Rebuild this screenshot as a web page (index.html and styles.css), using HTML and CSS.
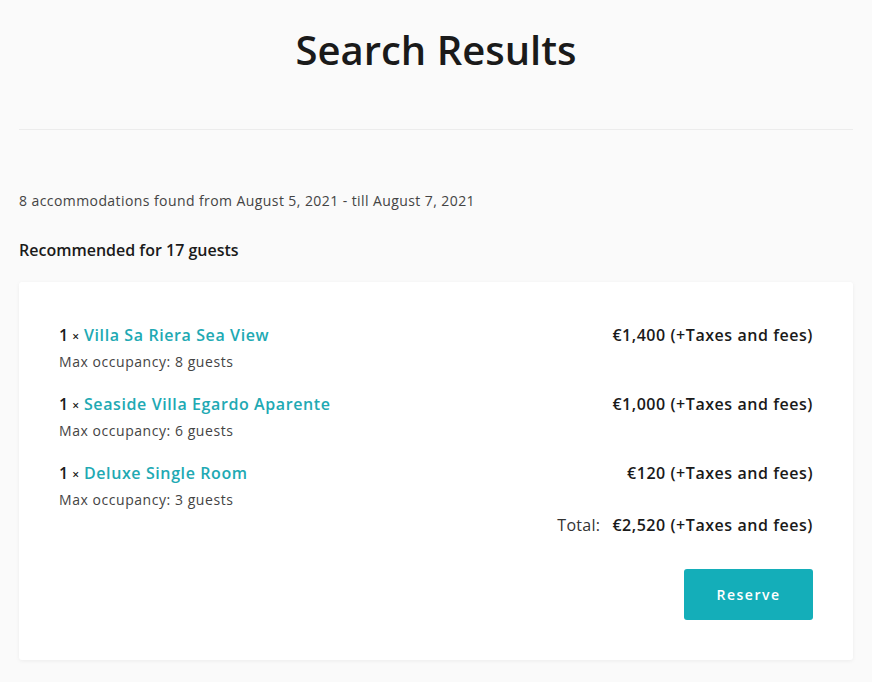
FILE: index.html
```html
<!DOCTYPE html>
<html>
    <head>
        <meta charset="UTF-8">
        <meta name="viewport" content="width=device-width, initial-scale=1">
        <link rel="stylesheet" href="styles.css">
    </head>
    <body>
        <div class="page">
            <h1 class="title">Search Results</h1>

            <p class="summary">8 accommodations found from August 5, 2021 - till August 7, 2021</p>
            <h3 class="recommended">Recommended for 17 guests</h3>

            <div class="card">
                <ul class="rooms">
                    <li class="room">
                        <div class="room-info">
                            <div class="room-name"><span class="qty">1 <span class="times">&times;</span></span> <a href="#">Villa Sa Riera Sea View</a></div>
                            <div class="occupancy">Max occupancy: 8 guests</div>
                        </div>
                        <div class="price">&euro;1,400 (+Taxes and fees)</div>
                    </li>
                    <li class="room">
                        <div class="room-info">
                            <div class="room-name"><span class="qty">1 <span class="times">&times;</span></span> <a href="#">Seaside Villa Egardo Aparente</a></div>
                            <div class="occupancy">Max occupancy: 6 guests</div>
                        </div>
                        <div class="price">&euro;1,000 (+Taxes and fees)</div>
                    </li>
                    <li class="room">
                        <div class="room-info">
                            <div class="room-name"><span class="qty">1 <span class="times">&times;</span></span> <a href="#">Deluxe Single Room</a></div>
                            <div class="occupancy">Max occupancy: 3 guests</div>
                        </div>
                        <div class="price">&euro;120 (+Taxes and fees)</div>
                    </li>
                </ul>

                <div class="total">
                    <span class="total-label">Total:</span>
                    <span class="price">&euro;2,520 (+Taxes and fees)</span>
                </div>

                <div class="actions">
                    <button class="reserveBtn">Reserve</button>
                </div>
            </div>
        </div>
    </body>
</html>
```

FILE: styles.css
```css
* {
    box-sizing: border-box;
}

body {
    margin: 0;
    background: #fafafa;
    color: #1a1a1a;
    font-family: "Open Sans", "Noto Sans", sans-serif;
}

.page {
    padding: 0 19px 20px;
}

/* Page heading with a thin rule below */
.title {
    margin: 0;
    padding: 26px 0 55px;
    font-size: 40px;
    line-height: 48px;
    font-weight: 600;
    text-align: center;
    border-bottom: 1px solid #ececec;
}

.summary {
    margin: 61px 0 0;
    font-size: 14px;
    line-height: 20px;
    letter-spacing: 0.42px;
    color: #444;
}

.recommended {
    margin: 29px 0 0;
    font-size: 16px;
    line-height: 20px;
    font-weight: 600;
}

/* The white box holding the rooms */
.card {
    margin-top: 22px;
    padding: 40px;
    background: #fff;
    border-radius: 3px;
    box-shadow: 0 1px 4px rgba(0, 0, 0, 0.06);
}

.rooms {
    margin: 0;
    padding: 0;
    list-style: none;
}

.room {
    display: flex;
    justify-content: space-between;
    align-items: flex-start;
}

.room + .room {
    margin-top: 19px;
}

.room-name {
    height: 26px;
    font-size: 16px;
    line-height: 26px;
    font-weight: 600;
    letter-spacing: 0.6px;
}

.room-name .qty {
    letter-spacing: 0;
}

.room-name a {
    color: #21a9b3;
    text-decoration: none;
}

.times {
    font-size: 12px;
    line-height: 0;
}

.occupancy {
    margin-top: 4px;
    font-size: 14px;
    line-height: 20px;
    letter-spacing: 0.55px;
    color: #444;
}

.price {
    font-size: 16px;
    line-height: 26px;
    font-weight: 600;
    letter-spacing: 0.55px;
}

.total {
    margin-top: 2px;
    display: flex;
    justify-content: flex-end;
    align-items: center;
    gap: 12px;
}

.total-label {
    font-size: 16px;
    letter-spacing: 0.3px;
    color: #333;
}

.actions {
    margin-top: 31px;
    display: flex;
    justify-content: flex-end;
}

.reserveBtn {
    width: 129px;
    height: 51px;
    border: none;
    border-radius: 3px;
    background: #14aeb9;
    color: #fff;
    font-family: inherit;
    font-size: 14px;
    font-weight: 600;
    letter-spacing: 1.5px;
    cursor: pointer;
}

.reserveBtn:hover {
    background: #119aa4;
}
```
